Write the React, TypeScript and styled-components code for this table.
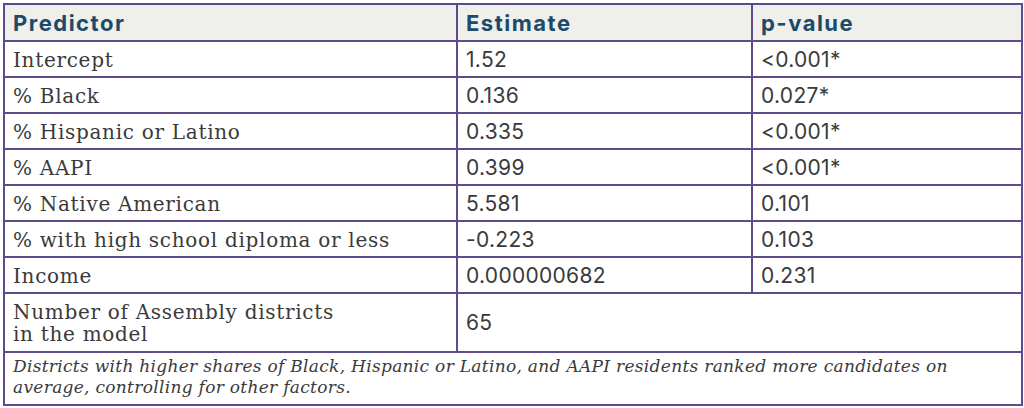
import styled, { createGlobalStyle } from 'styled-components';

const GlobalStyle = createGlobalStyle`
  html, body {
    margin: 0;
    padding: 0;
    background: #ffffff;
  }
`;

const Page = styled.div`
  padding: 3px 0 0 3px;
  width: 1018px;
`;

const Table = styled.table`
  width: 1018px;
  border-collapse: collapse;
  table-layout: fixed;
  border: 2px solid #5e4b8b;
`;

const HeadCell = styled.th`
  background: #efefeb;
  color: #1d4a68;
  font-family: Inter, 'Open Sans', sans-serif;
  font-weight: 700;
  font-size: 22px;
  text-align: left;
  height: 35px;
  padding: 0 8px;
  border: 2px solid #5e4b8b;
  letter-spacing: 1.5px;
`;

const Cell = styled.td<{ $serif?: boolean }>`
  font-family: ${(p) => (p.$serif ? "'DejaVu Serif', serif" : "Inter, 'Open Sans', sans-serif")};
  font-size: ${(p) => (p.$serif ? '20px' : '21px')};
  letter-spacing: ${(p) => (p.$serif ? '0.7px' : '0.3px')};
  color: #3a3a3a;
  height: 33px;
  padding: 1px 8px 0;
  line-height: 22px;
  border: 2px solid #5e4b8b;
  vertical-align: middle;
`;

const TallCell = styled(Cell)`
  height: 56px;
  line-height: 22px;
`;

const Note = styled.td`
  font-family: 'DejaVu Serif', serif;
  font-style: italic;
  font-size: 17px;
  letter-spacing: 0.3px;
  line-height: 21px;
  color: #3a3a3a;
  height: 44px;
  padding: 2px 8px 5px;
  border: 2px solid #5e4b8b;
`;

const rows = [
  ['Intercept', '1.52', '<0.001*'],
  ['% Black', '0.136', '0.027*'],
  ['% Hispanic or Latino', '0.335', '<0.001*'],
  ['% AAPI', '0.399', '<0.001*'],
  ['% Native American', '5.581', '0.101'],
  ['% with high school diploma or less', '-0.223', '0.103'],
  ['Income', '0.000000682', '0.231'],
];

const App = () => {
  return (
    <Page>
      <GlobalStyle />
      <Table>
        <colgroup>
          <col style={{ width: 453 }} />
          <col style={{ width: 295 }} />
          <col style={{ width: 270 }} />
        </colgroup>
        <thead>
          <tr>
            <HeadCell>Predictor</HeadCell>
            <HeadCell>Estimate</HeadCell>
            <HeadCell>p-value</HeadCell>
          </tr>
        </thead>
        <tbody>
          {rows.map(([name, est, p]) => (
            <tr key={name}>
              <Cell $serif>{name}</Cell>
              <Cell>{est}</Cell>
              <Cell>{p}</Cell>
            </tr>
          ))}
          <tr>
            <TallCell $serif>
              Number of Assembly districts
              <br />
              in the model
            </TallCell>
            <TallCell colSpan={2}>65</TallCell>
          </tr>
          <tr>
            <Note colSpan={3}>
              Districts with higher shares of Black, Hispanic or Latino, and AAPI residents ranked more candidates on
              <br />
              average, controlling for other factors.
            </Note>
          </tr>
        </tbody>
      </Table>
    </Page>
  );
};

export default App;
